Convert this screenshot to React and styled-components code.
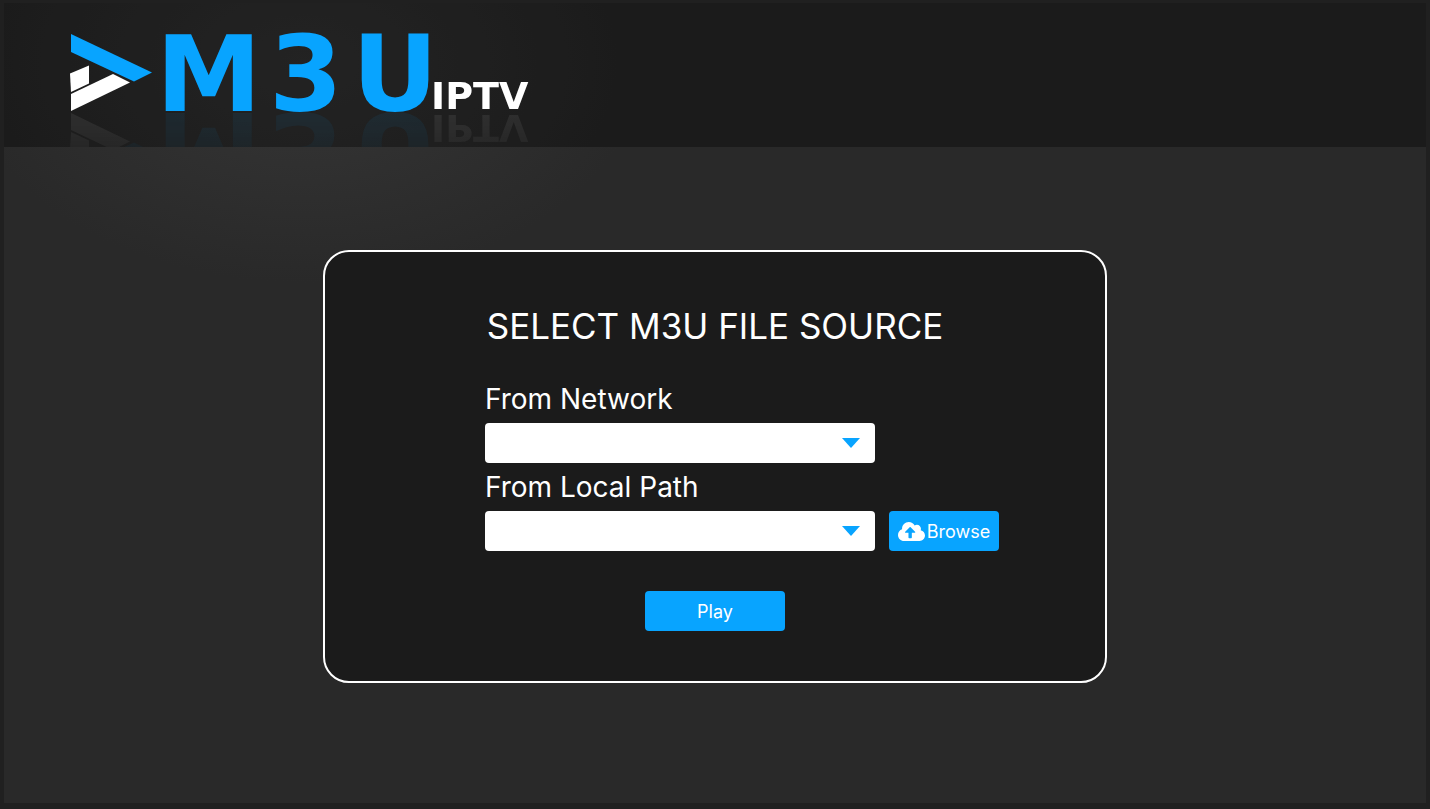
import React from "react";
//STYLING
import styled, { createGlobalStyle } from "styled-components";
//ICONS
import { FaCloudUploadAlt } from "react-icons/fa";

const App = () => {
  return (
    <>
      <GlobalStyle />
      <Frame>
        <Screen>
          <Header>
            <Logo />
          </Header>
          <Main>
            <SourceCard onSubmit={(e) => e.preventDefault()}>
              <Title>SELECT M3U FILE SOURCE</Title>
              <Fields>
                <SourceSelect id="network" label="From Network" />
                <SourceSelect id="local" label="From Local Path">
                  <BrowseButton type="button">
                    <FaCloudUploadAlt size={27} />
                    Browse
                  </BrowseButton>
                </SourceSelect>
              </Fields>
              <PlayButton type="submit">Play</PlayButton>
            </SourceCard>
          </Main>
        </Screen>
      </Frame>
    </>
  );
};

const Logo = () => (
  <LogoBox>
    <svg width="462" height="78" viewBox="0 0 462 78" role="img" aria-label="M3U IPTV">
      <polygon points="1,0 82,38.5 64,47.5 1,18" fill="#08a4ff" />
      <polygon points="0,39.5 19,31.5 19,49.5 1,58" fill="#fff" />
      <polygon points="1,60 43,40 60,48.5 1,77" fill="#fff" />
      <BrandText x="86 199 282" y="77">
        M3U
      </BrandText>
      <BrandSuffix x="361" y="75">
        IPTV
      </BrandSuffix>
    </svg>
  </LogoBox>
);

const SourceSelect = ({ id, label, children }) => (
  <Field>
    <Label htmlFor={id}>{label}</Label>
    <Row>
      <SelectBox>
        <Select id={id} defaultValue="">
          <option value=""></option>
        </Select>
        <Arrow viewBox="0 0 18 10" aria-hidden="true">
          <path d="M0 0h18l-9 10z" />
        </Arrow>
      </SelectBox>
      {children}
    </Row>
  </Field>
);

const GlobalStyle = createGlobalStyle`
  * {
    margin: 0;
    padding: 0;
    box-sizing: border-box;
  }
  body {
    background: #202020;
    color: white;
    font-family: Inter, "Liberation Sans", sans-serif;
  }
`;

const Frame = styled.div`
  display: flex;
  min-height: 100vh;
  padding: 3px 4px 6px;
`;
const Screen = styled.div`
  flex: 1;
  display: flex;
  flex-direction: column;
  background: radial-gradient(
      ellipse 340px 220px at 300px 60px,
      #363636,
      #292929
    )
    #292929;
`;
const Header = styled.header`
  height: 144px;
  padding: 31px 66px 0;
  overflow: hidden;
  background: rgba(0, 0, 0, 0.34);
`;
const LogoBox = styled.div`
  width: 462px;
  height: 78px;
  -webkit-box-reflect: below 0 linear-gradient(transparent, rgba(0, 0, 0, 0.08));
  svg {
    display: block;
    overflow: visible;
  }
`;
const BrandText = styled.text`
  fill: #08a4ff;
  font-family: "DejaVu Sans", sans-serif;
  font-size: 106px;
  font-weight: bold;
`;
const BrandSuffix = styled(BrandText)`
  fill: white;
  font-size: 38px;
`;

const Main = styled.main`
  flex: 1;
  display: flex;
  justify-content: center;
  align-items: flex-start;
  padding: 103px 20px 40px;
`;
const SourceCard = styled.form`
  display: flex;
  flex-direction: column;
  align-items: center;
  width: 100%;
  max-width: 784px;
  padding: 54px 0 50px;
  background: #1b1b1b;
  border: 2px solid white;
  border-radius: 26px;
`;
const Title = styled.h1`
  font-size: 35px;
  font-weight: 400;
  line-height: 40px;
`;
const Fields = styled.div`
  display: flex;
  flex-direction: column;
  gap: 6px;
  width: 100%;
  margin: 35px 0 40px;
  padding: 0 106px 0 160px;
`;
const Field = styled.div`
  display: flex;
  flex-direction: column;
  gap: 6px;
`;
const Label = styled.label`
  font-size: 28px;
  line-height: 36px;
`;
const Row = styled.div`
  display: flex;
  gap: 14px;
`;
const SelectBox = styled.div`
  position: relative;
  width: 390px;
`;
const Select = styled.select`
  display: block;
  appearance: none;
  width: 100%;
  height: 40px;
  padding: 0 44px 0 12px;
  background: white;
  border: none;
  border-radius: 4px;
  font: inherit;
  font-size: 18px;
`;
const Arrow = styled.svg`
  position: absolute;
  top: 15px;
  right: 15px;
  width: 18px;
  height: 10px;
  fill: #08a4ff;
  pointer-events: none;
`;
const Button = styled.button`
  display: flex;
  align-items: center;
  justify-content: center;
  height: 40px;
  background: #08a4ff;
  border: none;
  border-radius: 4px;
  color: white;
  font: inherit;
  font-size: 18px;
  cursor: pointer;
`;
const BrowseButton = styled(Button)`
  gap: 2px;
  width: 110px;
`;
const PlayButton = styled(Button)`
  width: 140px;
`;

export default App;
